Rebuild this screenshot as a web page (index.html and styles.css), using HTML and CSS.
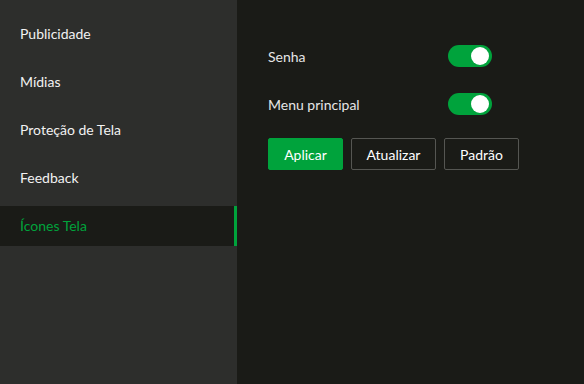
FILE: index.html
```html
<!DOCTYPE html>
<html lang="pt-BR">
<head>
    <meta charset="UTF-8">
    <meta name="viewport" content="width=device-width, initial-scale=1.0">
    <title>Ícones Tela</title>
    <link rel="stylesheet" href="styles.css">
</head>
<body>

    <div class="layout">
        <ul class="side-menu">
            <li class="menu-item">Publicidade</li>
            <li class="menu-item">Mídias</li>
            <li class="menu-item">Proteção de Tela</li>
            <li class="menu-item">Feedback</li>
            <li class="menu-item active">Ícones Tela</li>
        </ul>

        <div class="content">
            <div class="setting-row">
                <span class="setting-label">Senha</span>
                <label class="switch">
                    <input type="checkbox" checked>
                    <span class="slider"></span>
                </label>
            </div>
            <div class="setting-row">
                <span class="setting-label">Menu principal</span>
                <label class="switch">
                    <input type="checkbox" checked>
                    <span class="slider"></span>
                </label>
            </div>

            <div class="actions">
                <button class="btn btn-primary">Aplicar</button>
                <button class="btn btn-wide">Atualizar</button>
                <button class="btn">Padrão</button>
            </div>
        </div>
    </div>

</body>
</html>
```

FILE: styles.css
```css
body {
    font-family: 'Lato', 'Open Sans', sans-serif;
    font-size: 14px;
    background-color: #1a1b17;
    color: #fff;
    margin: 0;
    padding: 0;
}
.layout {
    display: flex;
    height: 384px;
}
.side-menu {
    width: 237px;
    margin: 0;
    padding: 14px 0 0;
    list-style: none;
    background-color: #2d2e2c;
    display: flex;
    flex-direction: column;
    gap: 8px;
}
.menu-item {
    height: 40px;
    line-height: 40px;
    padding-left: 20px;
    color: #f2f2f2;
    cursor: pointer;
}
.menu-item.active {
    background-color: #1a1b17;
    color: #00a33c;
    border-right: 3px solid #00a33c;
}
.content {
    flex: 1;
    padding: 32px 0 0 31px;
}
.setting-row {
    display: flex;
    align-items: center;
    width: 224px;
    justify-content: space-between;
    height: 48px;
}
.setting-label {
    color: #e6e6e6;
}
.switch {
    position: relative;
    display: inline-block;
    width: 44px;
    height: 22px;
}
.switch input {
    opacity: 0;
    width: 0;
    height: 0;
}
.slider {
    position: absolute;
    inset: 0;
    background-color: #00a33c;
    border-radius: 11px;
    cursor: pointer;
}
.slider::before {
    content: "";
    position: absolute;
    width: 18px;
    height: 18px;
    top: 2px;
    right: 3px;
    background-color: #fff;
    border-radius: 50%;
}
.actions {
    display: flex;
    gap: 8px;
    margin-top: 10px;
}
.btn {
    height: 32px;
    width: 75px;
    padding: 0;
    font-family: inherit;
    font-size: 14px;
    background-color: transparent;
    border: 1px solid #555652;
    border-radius: 2px;
    color: #fff;
    cursor: pointer;
}
.btn-wide {
    width: 85px;
}
.btn-primary {
    background-color: #00a33c;
    border-color: #00a33c;
}
```
